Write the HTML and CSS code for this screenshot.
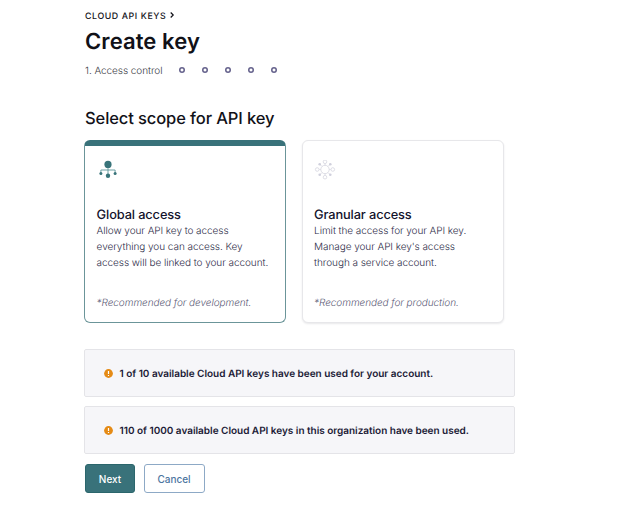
FILE: index.html
```html
<!DOCTYPE html>
<html lang="en">
<head>
<meta charset="utf-8">
<title>Create key</title>
<link rel="stylesheet" href="styles.css">
</head>
<body>
<main class="page">
  <nav class="breadcrumb">
    <span>CLOUD API KEYS</span>
    <svg class="chevron" width="4" height="6" viewBox="0 0 4 6"><path d="M.7.5 3.2 3 .7 5.5"/></svg>
  </nav>
  <h1 class="title">Create key</h1>
  <div class="steps">
    <span class="step-label">1. Access control</span>
    <i class="dot"></i><i class="dot"></i><i class="dot"></i><i class="dot"></i><i class="dot"></i>
  </div>
  <h2 class="subtitle">Select scope for API key</h2>
  <section class="cards">
    <article class="card selected">
      <svg class="icon" width="22" height="22" viewBox="0 0 22 22">
        <path class="g-line" d="M11 6v9M3.9 13.2v-3.2h14.2v3.2"/>
        <circle class="g-fill" cx="11" cy="4.4" r="3.6"/>
        <circle class="g-fill" cx="11" cy="15.8" r="2.2"/>
        <circle class="g-fill" cx="3.9" cy="13.6" r="1.5"/>
        <circle class="g-fill" cx="18.1" cy="13.6" r="1.5"/>
      </svg>
      <h3 class="card-title">Global access</h3>
      <p class="card-text">Allow your API key to access<br>everything you can access. Key<br>access will be linked to your account.</p>
      <p class="note">*Recommended for development.</p>
    </article>
    <article class="card">
      <svg class="icon" width="22" height="22" viewBox="0 0 22 22">
        <g class="n-line">
          <circle cx="11" cy="9.5" r="4.2"/>
          <path d="M11 3.8v1.5M11 13.7v1.5M5.3 9.5h1.5M15.2 9.5h1.5M8 6.5 6 4.5M14 6.5l2-2M8 12.5l-2 2M14 12.5l2 2"/>
          <circle cx="11" cy="1.8" r="1.8"/><circle cx="11" cy="17.2" r="1.8"/>
          <circle cx="3.2" cy="9.5" r="1.8"/><circle cx="18.8" cy="9.5" r="1.8"/>
        </g>
        <g class="n-fill">
          <circle cx="5.7" cy="4.2" r="1.3"/><circle cx="16.3" cy="4.2" r="1.3"/>
          <circle cx="5.7" cy="14.8" r="1.3"/><circle cx="16.3" cy="14.8" r="1.3"/>
        </g>
      </svg>
      <h3 class="card-title">Granular access</h3>
      <p class="card-text">Limit the access for your API key.<br>Manage your API key's access<br>through a service account.</p>
      <p class="note">*Recommended for production.</p>
    </article>
  </section>
  <section class="alerts">
    <div class="alert">
      <svg class="warn" width="9" height="9" viewBox="0 0 9 9"><circle cx="4.5" cy="4.5" r="4.4"/><path d="M4.5 2v3M4.5 6.1v1"/></svg>
      <span>1 of 10 available Cloud API keys have been used for your account.</span>
    </div>
    <div class="alert">
      <svg class="warn" width="9" height="9" viewBox="0 0 9 9"><circle cx="4.5" cy="4.5" r="4.4"/><path d="M4.5 2v3M4.5 6.1v1"/></svg>
      <span>110 of 1000 available Cloud API keys in this organization have been used.</span>
    </div>
  </section>
  <div class="actions">
    <button class="btn primary">Next</button>
    <button class="btn secondary">Cancel</button>
  </div>
</main>
</body>
</html>
```
FILE: styles.css
```css
* { box-sizing: border-box; }
body { margin: 0; background: #fff; color: #111118; font-family: Inter, "Liberation Sans", sans-serif; text-rendering: geometricPrecision; }
h1, h2, h3, p { margin: 0; }
.page { padding: 9px 0 0 84px; width: 515px; }
.breadcrumb { display: flex; align-items: center; gap: 4px; height: 13px; padding-left: 1px; font-size: 8.8px; font-weight: 500; letter-spacing: .6px; line-height: 13px; }
.breadcrumb span { padding-top: 1px; }
.chevron { overflow: visible; margin-top: -1px; }
.chevron path { fill: none; stroke: #111118; stroke-width: 1.2; }
.title { margin-top: 5px; padding-left: 1px; font-size: 22px; line-height: 30px; font-weight: 600; letter-spacing: .1px; }
.steps { display: flex; align-items: center; height: 14px; margin-top: 6px; padding-left: 1px; font-size: 10px; }
.step-label { width: 94px; padding-top: 1px; color: #3a3a44; font-weight: 300; letter-spacing: -.06px; white-space: nowrap; }
.dot { width: 6px; height: 6px; margin-right: 17px; border-radius: 50%; flex: none; background: radial-gradient(circle, #fff 1.1px, #65628c 1.8px); }
.subtitle { margin-top: 29px; padding-left: 1px; font-size: 16.5px; line-height: 24px; font-weight: 500; letter-spacing: -.1px; }
.cards { display: flex; gap: 15.5px; margin-top: 10px; }
.card { width: 202px; height: 183px; padding: 19px 11px 0 11.6px; border: 1px solid #e7e7ea; border-radius: 6px; background: #fff; box-shadow: 0 1px 2px rgba(30, 30, 50, .1); }
.card.selected { padding-top: 14px; border-color: #6b9599; border-top: 6px solid #39727a; box-shadow: none; }
.icon { display: block; }
.g-line { fill: none; stroke: #5e969a; stroke-width: .9; }
.g-fill { fill: #39747a; }
.n-line { fill: none; stroke: #d5d5e0; stroke-width: .8; }
.n-fill { fill: #d0d0dd; }
.card-title { margin-top: 26px; font-size: 12.8px; line-height: 16px; font-weight: 500; letter-spacing: -.12px; color: #12122b; }
.card-text { margin-top: -1px; font-size: 10px; line-height: 16px; font-weight: 300; letter-spacing: -.06px; color: #2c2b48; white-space: nowrap; }
.note { margin-top: 24px; font-size: 10px; line-height: 16px; font-style: italic; font-weight: 300; letter-spacing: -.06px; color: #5a5975; white-space: nowrap; }
.alerts { display: flex; flex-direction: column; gap: 9px; width: 431px; margin-top: 26px; }
.alert { display: flex; align-items: center; gap: 7px; height: 48px; padding-left: 18.5px; border: 1px solid #e4e4e8; border-radius: 2px; background: #f6f6f9; font-size: 10px; font-weight: 600; letter-spacing: -.02px; color: #1b1a36; white-space: nowrap; }
.alert span { padding-top: 1px; }
.warn circle { fill: #e58b16; }
.warn path { stroke: #fff; stroke-width: 1.2; fill: none; }
.actions { display: flex; gap: 8.5px; margin-top: 10px; padding-left: 1px; }
.btn { height: 29px; padding: 1px 0 0; border-radius: 3px; font: 500 10px/26px Inter, "Liberation Sans", sans-serif; }
.primary { width: 50px; border: 1px solid #2b666c; background: #39727a; color: #fff; }
.secondary { width: 61px; border: 1px solid #8da9c6; background: #fff; color: #4c759f; }
```
